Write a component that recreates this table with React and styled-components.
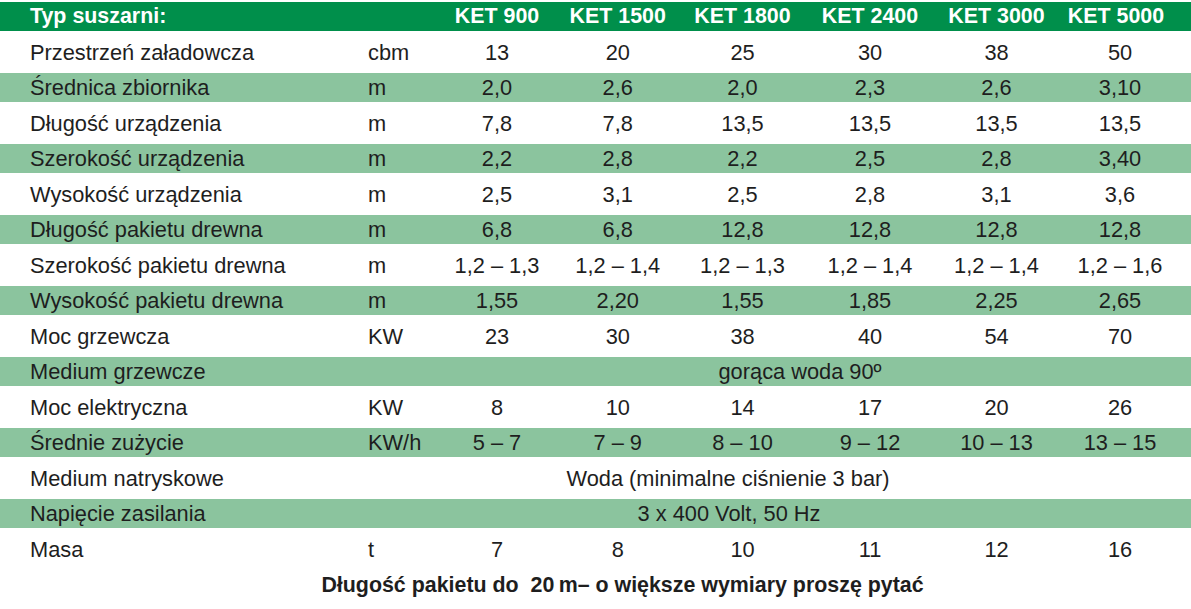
import styled, { createGlobalStyle } from 'styled-components';

const GlobalStyle = createGlobalStyle`
  html, body {
    margin: 0;
    padding: 0;
    background: #ffffff;
  }
  body {
    font-family: 'Liberation Sans', Arial, sans-serif;
    color: #1e1e1e;
  }
`;

const COLS = '30px 338px 69.5px 119px 122.5px 127px 128px 125px 122px 10px';

const Sheet = styled.div`
  width: 1191px;
  padding-top: 2px;
`;

const Row = styled.div`
  display: grid;
  grid-template-columns: ${COLS};
  align-items: center;
  height: ${p => (p.$green ? 29 : 42)}px;
  padding-top: 1px;
  box-sizing: border-box;
  background: ${p => (p.$green ? '#8bc49e' : '#ffffff')};
  font-size: 21.8px;
  line-height: 1;
`;

const HeaderRow = styled(Row)`
  height: 29px;
  background: #008f4b;
  color: #ffffff;
  font-weight: bold;
  font-size: 21.4px;
`;

const Label = styled.div`
  grid-column: 2;
  white-space: nowrap;
`;

const Unit = styled.div`
  grid-column: 3;
  white-space: nowrap;
`;

const Value = styled.div`
  text-align: center;
  white-space: nowrap;
`;

const HeadValue = styled(Value)`
  padding-right: ${p => (p.$last ? 8 : 0)}px;
`;

const SpanValue = styled.div`
  grid-column: 4 / 10;
  padding-left: ${p => p.$indent}px;
  white-space: nowrap;
`;

const Footnote = styled.div`
  height: 30px;
  display: flex;
  align-items: center;
  justify-content: center;
  padding-left: 54px;
  font-weight: bold;
  font-size: 21.4px;
  color: #1e1e1e;
`;

const models = ['KET 900', 'KET 1500', 'KET 1800', 'KET 2400', 'KET 3000', 'KET 5000'];

const rows = [
  { label: 'Przestrzeń załadowcza', unit: 'cbm', values: ['13', '20', '25', '30', '38', '50'] },
  { label: 'Średnica zbiornika', unit: 'm', values: ['2,0', '2,6', '2,0', '2,3', '2,6', '3,10'] },
  { label: 'Długość urządzenia', unit: 'm', values: ['7,8', '7,8', '13,5', '13,5', '13,5', '13,5'] },
  { label: 'Szerokość urządzenia', unit: 'm', values: ['2,2', '2,8', '2,2', '2,5', '2,8', '3,40'] },
  { label: 'Wysokość urządzenia', unit: 'm', values: ['2,5', '3,1', '2,5', '2,8', '3,1', '3,6'] },
  { label: 'Długość pakietu drewna', unit: 'm', values: ['6,8', '6,8', '12,8', '12,8', '12,8', '12,8'] },
  { label: 'Szerokość pakietu drewna', unit: 'm', values: ['1,2 – 1,3', '1,2 – 1,4', '1,2 – 1,3', '1,2 – 1,4', '1,2 – 1,4', '1,2 – 1,6'] },
  { label: 'Wysokość pakietu drewna', unit: 'm', values: ['1,55', '2,20', '1,55', '1,85', '2,25', '2,65'] },
  { label: 'Moc grzewcza', unit: 'KW', values: ['23', '30', '38', '40', '54', '70'] },
  { label: 'Medium grzewcze', span: 'gorąca woda 90º', indent: 281 },
  { label: 'Moc elektryczna', unit: 'KW', values: ['8', '10', '14', '17', '20', '26'] },
  { label: 'Średnie zużycie', unit: 'KW/h', values: ['5 – 7', '7 – 9', '8 – 10', '9 – 12', '10 – 13', '13 – 15'] },
  { label: 'Medium natryskowe', span: 'Woda (minimalne ciśnienie 3 bar)', indent: 129 },
  { label: 'Napięcie zasilania', span: '3 x 400 Volt, 50 Hz', indent: 200 },
  { label: 'Masa', unit: 't', values: ['7', '8', '10', '11', '12', '16'] },
];

export default function App() {
  return (
    <>
      <GlobalStyle />
      <Sheet>
        <HeaderRow>
          <Label>Typ suszarni:</Label>
          <Unit />
          {models.map((m, i) => (
            <HeadValue key={m} $last={i === models.length - 1}>{m}</HeadValue>
          ))}
        </HeaderRow>
        {rows.map((r, i) => (
          <Row key={r.label} $green={i % 2 === 1}>
            <Label>{r.label}</Label>
            {r.span ? (
              <SpanValue $indent={r.indent}>{r.span}</SpanValue>
            ) : (
              <>
                <Unit>{r.unit}</Unit>
                {r.values.map((v, j) => (
                  <Value key={j}>{v}</Value>
                ))}
              </>
            )}
          </Row>
        ))}
        <Footnote>Długość pakietu do&nbsp; 20&#8201;m– o większe wymiary proszę pytać</Footnote>
      </Sheet>
    </>
  );
}
